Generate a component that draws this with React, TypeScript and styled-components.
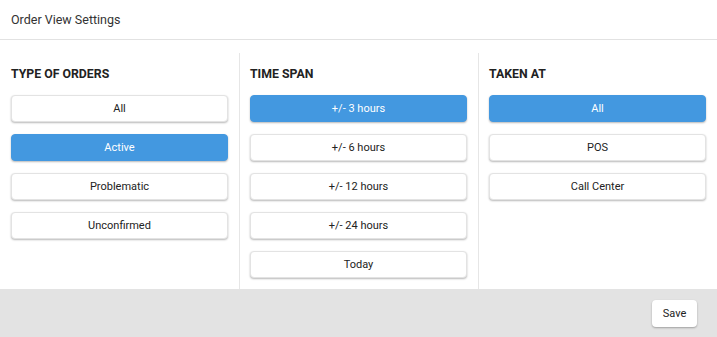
import { FC, useState } from "react";
import styled, { createGlobalStyle } from "styled-components";

const GlobalStyle = createGlobalStyle`
  html, body {
    margin: 0;
    padding: 0;
    background: #fff;
  }
  body {
    font-family: Roboto, "Liberation Sans", Arial, sans-serif;
    color: #222;
  }
`;

const Dialog = styled.div`
  width: 717px;
  height: 337px;
  display: flex;
  flex-direction: column;
  background: #fff;
`;

const Header = styled.header`
  height: 39px;
  border-bottom: 1px solid #e2e2e2;
  display: flex;
  align-items: center;
  padding: 0 11px;
  font-size: 12.5px;
  color: #333;
  box-sizing: content-box;
`;

const Body = styled.div`
  flex: 1;
  display: grid;
  grid-template-columns: repeat(3, 1fr);
  padding-top: 13px;
`;

const Column = styled.section`
  padding: 0 11px;

  & + & {
    border-left: 1px solid #e6e6e6;
    padding-left: 10px;
  }

  h3 {
    margin: 0 0 14px;
    padding-top: 14px;
    font-size: 12.3px;
    line-height: 14px;
    font-weight: 700;
    color: #222;
  }
`;

const Options = styled.div`
  display: flex;
  flex-direction: column;
  gap: 12px;
`;

const Option = styled.button<{ $active?: boolean }>`
  height: 27px;
  width: 100%;
  border-radius: 4px;
  border: 1px solid ${(p) => (p.$active ? "#4398e0" : "#e3e3e3")};
  background: ${(p) => (p.$active ? "#4398e0" : "#fff")};
  color: ${(p) => (p.$active ? "#fff" : "#222")};
  box-shadow: 0 1px 2px rgba(0, 0, 0, 0.28);
  font-family: inherit;
  font-size: 11px;
  cursor: pointer;
  padding: 0;
`;

const Footer = styled.footer`
  height: 48px;
  background: #e3e3e3;
  display: flex;
  align-items: flex-start;
  justify-content: flex-end;
  padding: 11px 20px 0 0;
  box-sizing: border-box;
`;

const SaveButton = styled.button`
  width: 45px;
  height: 27px;
  border: none;
  border-radius: 4px;
  background: #fff;
  color: #222;
  box-shadow: 0 1px 2px rgba(0, 0, 0, 0.3);
  font-family: inherit;
  font-size: 11px;
  cursor: pointer;
  padding: 0;
`;

interface IGroup {
  title: string
  options: string[]
  initial: number
}

const groups: IGroup[] = [
  { title: "TYPE OF ORDERS", options: ["All", "Active", "Problematic", "Unconfirmed"], initial: 1 },
  { title: "TIME SPAN", options: ["+/- 3 hours", "+/- 6 hours", "+/- 12 hours", "+/- 24 hours", "Today"], initial: 0 },
  { title: "TAKEN AT", options: ["All", "POS", "Call Center"], initial: 0 },
];

const Group: FC<IGroup> = ({ title, options, initial }) => {
  const [selected, setSelected] = useState(initial);
  return (
    <Column>
      <h3>{title}</h3>
      <Options>
        {options.map((o, i) => (
          <Option key={o} $active={i === selected} onClick={() => setSelected(i)}>
            {o}
          </Option>
        ))}
      </Options>
    </Column>
  );
};

const App: FC = () => {
  return (
    <>
      <GlobalStyle />
      <Dialog>
        <Header>Order View Settings</Header>
        <Body>
          {groups.map((g) => (
            <Group key={g.title} {...g} />
          ))}
        </Body>
        <Footer>
          <SaveButton>Save</SaveButton>
        </Footer>
      </Dialog>
    </>
  );
};

export default App;
